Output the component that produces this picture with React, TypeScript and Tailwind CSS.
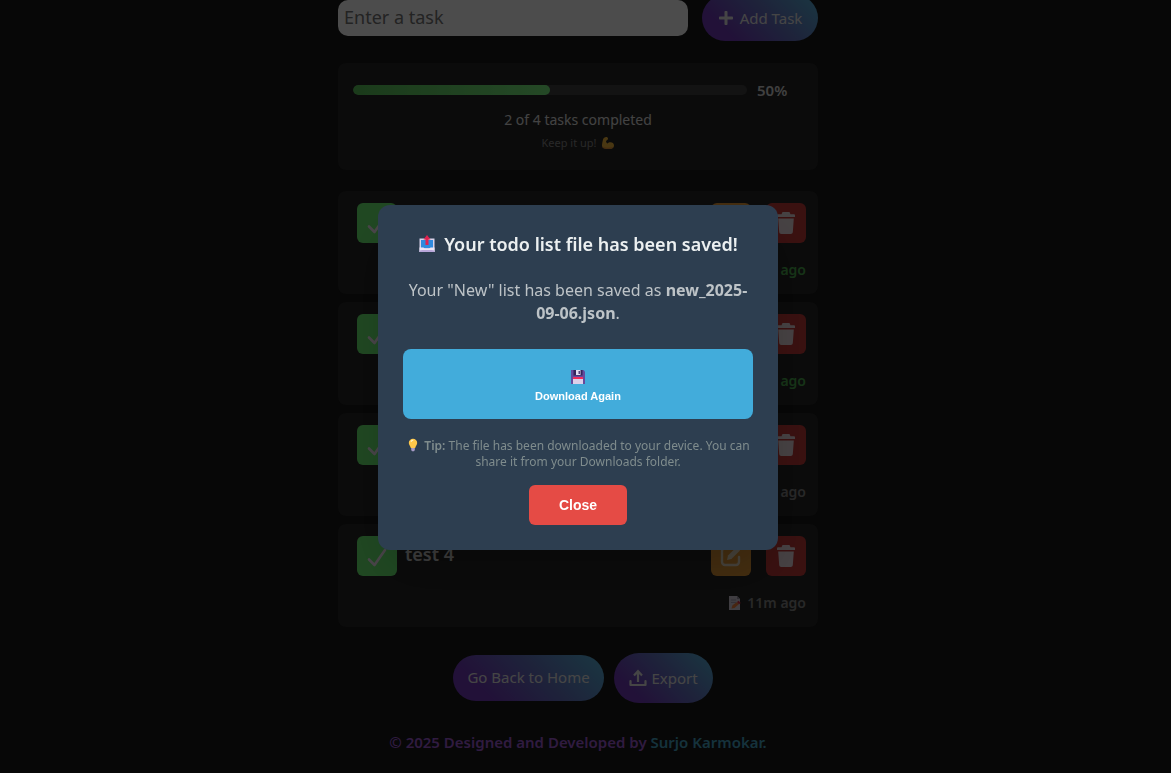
import React from "react";
import { FaPlus } from "react-icons/fa";

type Task = { id: number; title: string; age: string; done: boolean };

const tasks: Task[] = [
  { id: 1, title: "test 1", age: "11m ago", done: true },
  { id: 2, title: "test 2", age: "11m ago", done: true },
  { id: 3, title: "test 3", age: "11m ago", done: false },
  { id: 4, title: "test 4", age: "11m ago", done: false },
];

const gradient = "bg-linear-[45deg,#7239bb_20%,#6478c4_60%,#58b8dc]";

const CheckIcon = () => (
  <svg viewBox="0 0 24 24" className="mt-1 h-6 w-6" fill="none" stroke="#f4e6f4" strokeWidth="2.6" strokeLinecap="round" strokeLinejoin="round">
    <path d="M4 13.5 9.5 19 20 4" />
  </svg>
);

const EditIcon = () => (
  <svg viewBox="0 0 24 24" className="h-6 w-6" fill="none" stroke="#f0e2ca">
    <path d="M12 4H6a3 3 0 0 0-3 3v11a3 3 0 0 0 3 3h11a3 3 0 0 0 3-3v-5" strokeWidth="2.4" strokeLinecap="round" />
    <path d="M8 16l1-4.4L17.6 3l3.4 3.4L12.4 15z" fill="#f0e2ca" stroke="none" />
    <path d="M18.5 2.1l1.100-1a1.400 1.400 0 0 1 2 0l1.300 1.300a1.400 1.400 0 0 1 0 2l-1 1.100z" fill="#f0e2ca" stroke="none" />
  </svg>
);

const TrashIcon = () => (
  <svg viewBox="0 0 20 24" className="h-6 w-5" fill="#ecdde2">
    <path d="M5.500 3.200 6.500 1h7l1 2.200H18a1 1 0 0 1 1 1V6H1V4.200a1 1 0 0 1 1-1z" />
    <path d="M2.200 7.500h15.600l-1 13.700a2 2 0 0 1-2 1.800H5.200a2 2 0 0 1-2-1.800z" />
  </svg>
);

const UploadIcon = () => (
  <svg viewBox="0 0 18 18" className="h-[18px] w-[18px]" fill="none" stroke="currentColor" strokeWidth="2.2">
    <path d="M9 13V3M5 6.500 9 2.200l4 4.300" />
    <path d="M1.500 12v4h15v-4" strokeLinejoin="round" strokeLinecap="round" />
  </svg>
);

const MemoIcon = () => (
  <svg viewBox="0 0 16 16" className="h-4 w-4">
    <path d="M2 1h8l3 3v11H2z" fill="#d5d0dc" />
    <path d="M10 1v3h3z" fill="#9a93a8" />
    <path d="M4 5h5M4 7.500h5" stroke="#a8a2b5" />
    <path d="M4.500 13.500l1-3.200L10 7l2 2-4.500 4z" fill="#f0803c" />
    <path d="M10 7l1.600-1.200L13.800 8 12 9.200z" fill="#e0304a" />
  </svg>
);

const MuscleIcon = () => (
  <svg viewBox="0 0 14 14" className="h-3.5 w-3.5">
    <path d="M2 3.500C2.500 1.500 5 .5 6.500 1.500c1 .7.600 2.500-.7 2.800L5 5.200c.2 1.300.8 2 1.500 2.400C8 5.600 13 5.800 13 9.400c0 3-3 3.600-6 3.600-3.500 0-6-1-6-3.500 0-2 .6-4.200 1-6z" fill="#f5b83d" />
    <path d="M1 10c1.500 2 6 2 11.500 1-1 1.700-3 2-5.500 2-3.500 0-6-1-6-3z" fill="#df8e3a" />
  </svg>
);

const OutboxIcon = () => (
  <svg viewBox="0 0 18 18" className="h-[18px] w-[18px]">
    <path d="M1.500 3.500h15V17h-15z" fill="#d9d3ea" />
    <path d="M3 5h12v8H3z" fill="#2f8ade" />
    <path d="M1.500 12.500h4l1.500 1.500h4l1.500-1.500h4V17h-15z" fill="#ebe5f5" />
    <path d="M1.500 17v-1.500l3-.5h9l3 .5V17z" fill="#b8a6d9" />
    <path d="M9 0l3.500 4.500h-2V10h-3V4.500h-2z" fill="#e0224f" />
  </svg>
);

const FloppyIcon = () => (
  <svg viewBox="0 0 16 16" className="h-4 w-4">
    <path d="M1 1h12.500L15 2.500V15H1z" fill="#654a9c" />
    <path d="M3.500 1h9v5.500h-9z" fill="#33245c" />
    <path d="M6 1h4.500v5H6z" fill="#e3dcf0" />
    <path d="M8.500 2H10v3H8.500z" fill="#584683" />
    <path d="M3 8h10v7H3z" fill="#ddd0e9" />
    <path d="M3 8h10v2H3z" fill="#f02d5c" />
  </svg>
);

const BulbIcon = () => (
  <svg viewBox="0 0 14 14" className="h-3.5 w-3.5">
    <path d="M7 .8a4.200 4.200 0 0 0-4.200 4.200c0 2 1.700 3 2 5h4.400c.3-2 2-3 2-5A4.200 4.200 0 0 0 7 .8z" fill="#ffc84a" />
    <path d="M5 3.800c.5-1.300 1.300-1.700 2.300-1.700" stroke="#fff3c4" strokeWidth="1.200" fill="none" />
    <path d="M5.200 10h3.600v2L8 13.200H6L5.200 12z" fill="#a79bc6" />
  </svg>
);

const TaskCard: React.FC<{ task: Task }> = (props) => {
  return (
    <li className="h-[103px] rounded-lg bg-[#262626] pt-3 pr-3 pl-[19px]">
      <div className="flex items-start">
        <button
          type="button"
          aria-label="Toggle task"
          className="flex h-10 w-10 items-center justify-center rounded-md bg-[#6cf274]"
        >
          <CheckIcon />
        </button>
        <h2 className="ml-2 flex-grow pt-1 text-lg leading-7 font-semibold text-[#d0d0d0]">
          {props.task.title}
        </h2>
        <button
          type="button"
          aria-label="Edit task"
          className="flex h-10 w-10 items-center justify-center rounded-md bg-[#e69a38]"
        >
          <EditIcon />
        </button>
        <button
          type="button"
          aria-label="Delete task"
          className="ml-[15px] flex h-10 w-10 items-center justify-center rounded-md bg-[#c23a38]"
        >
          <TrashIcon />
        </button>
      </div>
      <p
        className={
          props.task.done
            ? "mt-[17px] flex items-center justify-end gap-1 text-sm leading-5 font-semibold text-[#4caf50]"
            : "mt-[17px] flex items-center justify-end gap-1 text-sm leading-5 font-semibold text-[#888888]"
        }
      >
        <MemoIcon />
        {props.task.age}
      </p>
    </li>
  );
};

const SavedDialog = () => {
  return (
    <div className="fixed inset-0 flex items-center justify-center bg-black/70 pr-[15px] pb-[18px]">
      <div
        role="dialog"
        aria-labelledby="saved-title"
        className="w-[400px] rounded-xl bg-[#2d3e50] p-[25px] text-center shadow-2xl"
      >
        <h3
          id="saved-title"
          className="flex items-center justify-center gap-2 text-lg leading-7 font-semibold text-[#ecf0f1]"
        >
          <OutboxIcon />
          Your todo list file has been saved!
        </h3>
        <p className="mt-[21px] text-base leading-[23px] text-[#bdc3c7]">
          Your "New" list has been saved as <strong className="font-bold">new_2025-09-06.json</strong>.
        </p>
        <button
          type="button"
          className="mt-6 flex h-[70px] w-full flex-col items-center justify-center gap-1 rounded-lg bg-[#42acdb] pt-[3px] font-['Liberation_Sans',sans-serif] text-[11px] leading-[14px] font-bold text-white"
        >
          <FloppyIcon />
          Download Again
        </button>
        <p className="mt-[19px] text-xs leading-4 text-[#7f8c8d]">
          <span className="mr-1 inline-block h-4 align-bottom"><BulbIcon /></span>
          <strong className="font-semibold">Tip:</strong> The file has been downloaded to your device. You can share it from your Downloads folder.
        </p>
        <button
          type="button"
          className="mt-[15px] h-10 rounded-md bg-[#e54b45] px-[30px] font-['Liberation_Sans',sans-serif] text-sm font-bold text-white"
        >
          Close
        </button>
      </div>
    </div>
  );
};

export default function App() {
  return (
    <div className="min-h-screen bg-[#181818] pr-[15px] font-['Noto_Sans',sans-serif]">
      <main className="mx-auto w-[480px] max-w-full">
        <form className="flex h-9 items-center gap-3.5">
          <input
            type="text"
            aria-label="Task"
            placeholder="Enter a task"
            className="h-9 min-w-0 flex-grow rounded-[10px] bg-white px-1.5 pb-0.5 text-lg text-black placeholder:text-[#757575]"
          />
          <button
            type="button"
            className={`flex h-[46px] w-[116px] shrink-0 items-center justify-center gap-1.5 rounded-full text-[15px] text-[#e8e8e8] ${gradient}`}
          >
            <FaPlus className="h-4 w-4" />
            Add Task
          </button>
        </form>

        <section className="mt-[27px] h-[107px] rounded-lg bg-[#262626] px-[15px] pt-[17px] text-center">
          <div className="flex items-center gap-2.5">
            <div className="h-2.5 flex-grow overflow-hidden rounded-full bg-[#404040]">
              <div className="h-full w-1/2 rounded-full bg-linear-to-r from-[#5bc55b] to-[#7bf380]"></div>
            </div>
            <span className="w-[46px] text-left text-[15px] leading-5 font-semibold text-[#d8d8d8]">50%</span>
          </div>
          <p className="mt-2.5 text-sm leading-5 text-[#e0e0e0]">2 of 4 tasks completed</p>
          <p className="mt-[5px] flex items-center justify-center gap-1 text-[11px] leading-4 text-[#888888]">
            Keep it up! <MuscleIcon />
          </p>
        </section>

        <ul className="mt-[21px] space-y-2">
          {tasks.map((task) => (
            <TaskCard key={task.id} task={task} />
          ))}
        </ul>

        <div className="mt-[26px] flex items-center justify-center gap-2.5 pl-2.5">
          <button type="button" className={`h-[46px] w-[151px] rounded-full pb-0.5 text-[15px] text-[#e8e8e8] ${gradient}`}>
            Go Back to Home
          </button>
          <button
            type="button"
            className={`flex h-[50px] w-[99px] items-center justify-center gap-1 rounded-full text-[15px] text-[#e8e8e8] ${gradient}`}
          >
            <UploadIcon />
            Export
          </button>
        </div>

        <footer className="mt-7 text-center text-[15px] leading-[22px] font-semibold text-[#a05cd6]">
          © 2025 Designed and Developed by{" "}
          <a href="#surjo" className="text-[#48a8c8]">Surjo Karmokar.</a>
        </footer>
      </main>
      <SavedDialog />
    </div>
  );
}
